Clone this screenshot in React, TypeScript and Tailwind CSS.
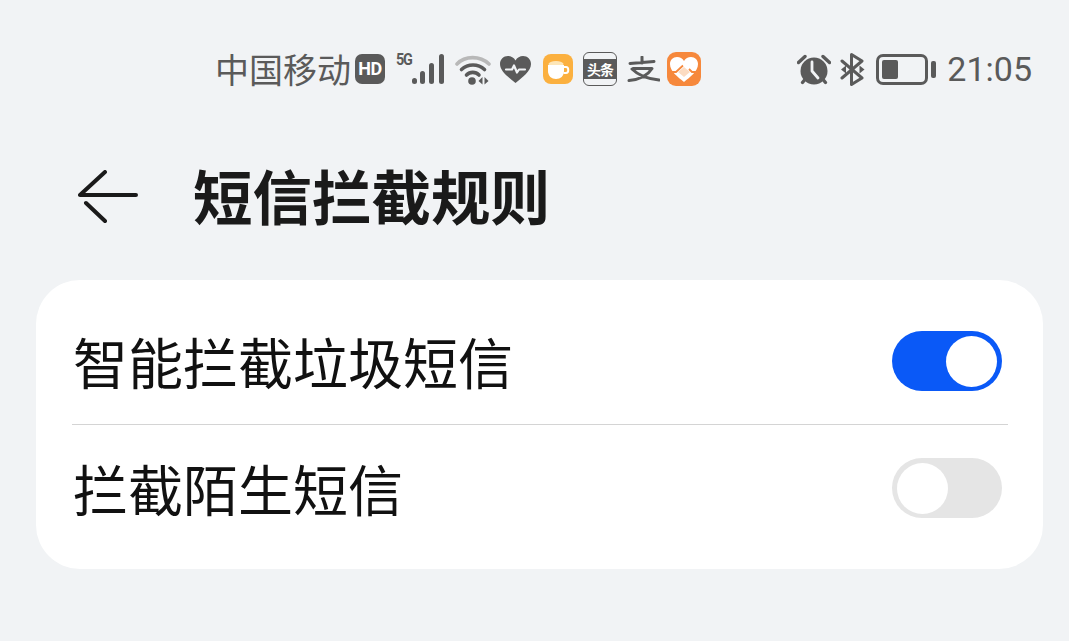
const gray = '#5a5a5a';

function Signal() {
  return (
    <div className="flex items-start">
      <span className="text-[16px] leading-[14px] font-bold text-[#5a5a5a] w-[16px] tracking-[-1.500px] font-['Roboto',sans-serif] scale-x-90 origin-left">5G</span>
      <svg width="33" height="31" viewBox="0 0 33 31" className="mt-[1px]">
        <rect x="0" y="24" width="5" height="6" rx="2.500" fill={gray} />
        <rect x="8" y="17" width="5" height="13" rx="2.500" fill={gray} />
        <rect x="17" y="9" width="5" height="21" rx="2.500" fill={gray} />
        <rect x="27" y="0" width="5" height="30" rx="2.500" fill={gray} />
      </svg>
    </div>
  );
}

function Wifi() {
  return (
    <svg width="37" height="31" viewBox="0 0 37 31" fill="none">
      <path d="M2 10C10 1.500 25 1.500 34 10" stroke="#b8b8b8" strokeWidth="3.600" strokeLinecap="round" />
      <path d="M6.500 15.500C13 9.500 23 9.500 29.500 15.500" stroke={gray} strokeWidth="3.600" strokeLinecap="round" />
      <path d="M11.500 21C15 17.500 20.500 17.500 24 21" stroke={gray} strokeWidth="3.600" strokeLinecap="round" />
      <circle cx="17" cy="27" r="3.800" fill={gray} />
      <path d="M27.500 23V30.500L23.500 27ZM29.500 23V30.500L33.500 27Z" fill={gray} />
    </svg>
  );
}

function Heart() {
  return (
    <svg width="31" height="27" viewBox="0 0 31 27">
      <path d="M15.500 27C9 21.500 0 15.500 0 8C0 3.500 3.500 0 8 0C11 0 14 1.500 15.500 4.500C17 1.500 20 0 23 0C27.500 0 31 3.500 31 8C31 15.500 22 21.500 15.500 27Z" fill={gray} />
      <path d="M6 13.500H12L14 9.500L17 16.500L19 13.500H25" fill="none" stroke="#f1f3f5" strokeWidth="2.200" strokeLinejoin="round" strokeLinecap="round" />
    </svg>
  );
}

function Coffee() {
  return (
    <div className="w-[30px] h-[30px] rounded-[8px] bg-[#fbb03f] flex items-center justify-center">
      <svg width="24" height="21" viewBox="0 0 24 21" fill="none">
        <ellipse cx="10" cy="5" rx="7.500" ry="3" fill="#fde6b8" />
        <path d="M2 6H18V12C18 17 14.500 20 10 20C5.500 20 2 17 2 12Z" fill="#fff" />
        <path d="M18 8H20C23 8 23 14 20 14H17.500" stroke="#fff" strokeWidth="2" />
      </svg>
    </div>
  );
}

function Toutiao() {
  return (
    <div className="w-[34px] h-[34px] rounded-[6px] border border-[#5a5a5a] bg-[#f1f3f5] flex items-center">
      <div className="w-full h-[20px] bg-[#5a5a5a] flex items-center justify-center">
        <span className="text-[14px] leading-none font-bold text-white whitespace-nowrap tracking-[-1px]">头条</span>
      </div>
    </div>
  );
}

function Zhi() {
  return (
    <svg width="33" height="26" viewBox="0 0 33 26" fill="none">
      <path d="M3 7.500L27 5.500M15 1V7M6 12.500H25C21 19 13 23.500 2 24.500M5 13C12 20 22 23 32 24" stroke={gray} strokeWidth="3" strokeLinecap="round" strokeLinejoin="round" />
    </svg>
  );
}

function Health() {
  return (
    <div className="w-[34px] h-[34px] rounded-[9px] bg-[#f6883c] flex items-center justify-center">
      <svg width="28" height="25" viewBox="0 0 28 25">
        <path d="M14 25C8 20 0 14.500 0 7C0 3 3 0 7 0C10 0 12.500 1.500 14 4C15.500 1.500 18 0 21 0C25 0 28 3 28 7C28 14.500 20 20 14 25Z" fill="#fff" />
        <path d="M0 15H6L13 8.500" fill="none" stroke="#f6883c" strokeWidth="1.800" />
        <path d="M28 15H22L19 12" fill="none" stroke="#f6883c" strokeWidth="1.800" />
        <path d="M8 15L14 10L20 15L14 20Z" fill="#fcdcc2" />
      </svg>
    </div>
  );
}

function Alarm() {
  return (
    <svg width="34" height="31" viewBox="0 0 34 31" fill="none">
      <circle cx="17" cy="17" r="13.500" fill={gray} />
      <path d="M1.500 8.500L8 2.500M32.500 8.500L26 2.500" stroke={gray} strokeWidth="3.400" strokeLinecap="round" />
      <path d="M5.500 28.500L8 25.500M28.500 28.500L26 25.500" stroke={gray} strokeWidth="3.400" strokeLinecap="round" />
      <path d="M15 8V17L21 24" stroke="#f1f3f5" strokeWidth="2.800" strokeLinecap="round" strokeLinejoin="round" />
    </svg>
  );
}

function Bluetooth() {
  return (
    <svg width="25" height="33" viewBox="0 0 25 33" fill="none">
      <path d="M2 8L22 25L11.500 31.500V1.500L22 8L2 25" stroke={gray} strokeWidth="3" strokeLinejoin="round" strokeLinecap="round" />
      <path d="M1 16.500L6 12.500V20.500ZM24.500 16.500L19.500 12.500V20.500Z" fill={gray} />
    </svg>
  );
}

function Battery() {
  return (
    <div className="flex items-center">
      <div className="w-[52px] h-[31px] rounded-[7px] border-[3px] border-[#5a5a5a] p-[3px] flex">
        <div className="w-[16px] h-full rounded-[2px] bg-[#5a5a5a]" />
      </div>
      <div className="ml-[3px] w-[5px] h-[17px] rounded-[2px] bg-[#5a5a5a]" />
    </div>
  );
}

function Toggle({ on }: { on: boolean }) {
  return (
    <div className={on
      ? 'w-[110px] h-[60px] rounded-full bg-[#0a59f7] flex items-center justify-end px-[5px]'
      : 'w-[110px] h-[60px] rounded-full bg-[#e5e5e5] flex items-center justify-start px-[5px]'}>
      <div className="w-[51px] h-[51px] rounded-full bg-white" />
    </div>
  );
}

export default function App() {
  return (
    <div className="w-[1069px] h-[641px] overflow-hidden bg-[#f1f3f5] pt-[45px] font-['Noto_Sans_CJK_SC',sans-serif]">
      <div className="h-[48px] pl-[215px] pr-[37px] flex items-center justify-between text-[#5a5a5a]">
        <div className="flex items-center">
          <span className="text-[34px] leading-[48px] whitespace-nowrap">中国移动</span>
          <div className="ml-[4px] w-[30px] h-[30px] rounded-[7px] bg-[#5a5a5a] flex items-center justify-center">
            <span className="text-[18px] leading-none font-bold text-white font-['Roboto',sans-serif] tracking-[-0.500px]">HD</span>
          </div>
          <div className="ml-[11px]"><Signal /></div>
          <div className="ml-[10px]"><Wifi /></div>
          <div className="ml-[8px]"><Heart /></div>
          <div className="ml-[12px]"><Coffee /></div>
          <div className="ml-[10px]"><Toutiao /></div>
          <div className="ml-[10px]"><Zhi /></div>
          <div className="ml-[7px]"><Health /></div>
        </div>
        <div className="flex items-center">
          <Alarm />
          <div className="ml-[9px]"><Bluetooth /></div>
          <div className="ml-[11px]"><Battery /></div>
          <span className="ml-[11px] text-[34px] leading-[48px] font-['Roboto',sans-serif]">21:05</span>
        </div>
      </div>

      <header className="h-[100px] mt-[54px] pl-[78px] flex items-center">
        <svg width="60" height="54" viewBox="0 0 60 54" fill="none">
          <path d="M58 25H2M27 2L2 25M8 33L27 51" stroke="#1a1a1a" strokeWidth="4" strokeLinecap="round" strokeLinejoin="round" />
        </svg>
        <h1 className="ml-[55px] pb-[4px] text-[59.500px] leading-none font-semibold text-[#1a1a1a] whitespace-nowrap">短信拦截规则</h1>
      </header>

      <div className="mt-[33px] ml-[36px] w-[1007px] h-[289px] rounded-[44px] bg-white pl-[36px] pr-[35px] pt-[18px] flex flex-col">
        <div className="h-[127px] flex items-center justify-between border-b border-[#d4d4d4] pr-[6px]">
          <span className="text-[55px] leading-none text-[#111] pl-[1px] pb-[2px] whitespace-nowrap">智能拦截垃圾短信</span>
          <Toggle on />
        </div>
        <div className="h-[126px] flex items-center justify-between pr-[6px]">
          <span className="text-[55px] leading-none text-[#111] pl-[1px] pb-[2px] whitespace-nowrap">拦截陌生短信</span>
          <Toggle on={false} />
        </div>
      </div>
    </div>
  );
}
